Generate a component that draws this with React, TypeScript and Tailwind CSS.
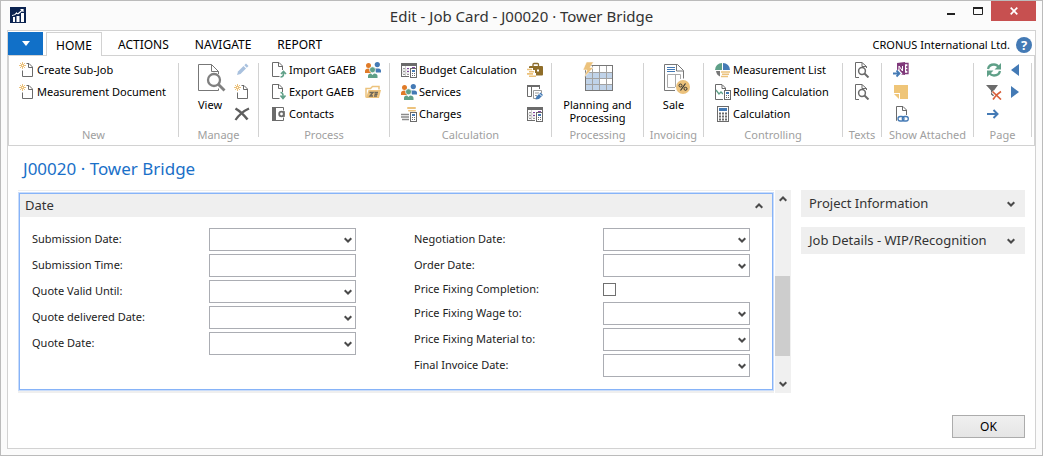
import React, { useId } from 'react';

type IconProps = { children: React.ReactNode; size?: number; className?: string };

function Icon({ children, size = 16, className = '' }: IconProps) {
  return (
    <svg
      width={size}
      height={size}
      viewBox={`0 0 ${size} ${size}`}
      fill="none"
      aria-hidden="true"
      className={`shrink-0 ${className}`}
    >
      {children}
    </svg>
  );
}

const GRAY = '#6b6b6b';
const BLUE = '#447ab5';
const GREEN = '#5fa088';
const SAND = '#ecc27c';
const ORANGE = '#e07b28';

const NewDocIcon = () => (
  <Icon>
    <path d="M7.5 1.5H10l3.500 3.500v9.500H3.500V8.500M9.500 1.500V5.500h4" stroke={GRAY} />
    <path d="M3.500 0v7M0 3.500h7M1 1l5 5M6 1L1 6" stroke={SAND} />
    <rect x="3" y="3" width="1" height="1" fill="#fff" />
  </Icon>
);

const DocArrowIcon = ({ down = false }: { down?: boolean }) => (
  <Icon>
    <path d="M8.500 14.500H1.500V.500H8l3.500 3.500v4M7.500 1v3.500H11.500" stroke={GRAY} />
    {down ? (
      <path d="M9.500 8.500c2 0 2.500 1 2.500 3v2M9.500 11.500l2.500 3 2.500-3" stroke={GREEN} strokeWidth="1.600" />
    ) : (
      <path d="M9.500 15c2 0 3-1 3-3V10M10 12l2.500-2.500 2.500 2.500" stroke={GREEN} strokeWidth="1.600" />
    )}
  </Icon>
);

const ContactsIcon = () => (
  <Icon>
    <rect x="1" y="1" width="4" height="14" fill={GRAY} />
    <path d="M4 1.500h8.500v3M4 14.500h8.500v-3" stroke={GRAY} />
    <circle cx="10.500" cy="8" r="2.300" stroke={GRAY} strokeWidth="1.800" />
    <path d="M13 5v6" stroke={GRAY} strokeWidth="1.500" />
  </Icon>
);

const PeopleIcon = () => (
  <Icon>
    <circle cx="3.500" cy="3.500" r="2.500" fill={ORANGE} />
    <path d="M0 11V9q0-2.500 3.500-2.500L6 8v3z" fill={ORANGE} />
    <circle cx="12.300" cy="2.600" r="2.600" fill={BLUE} />
    <path d="M9.500 6.500h4q2.500 0 2.500 2.500v1.500h-5z" fill={BLUE} />
    <circle cx="7.500" cy="7.800" r="3" fill={GREEN} stroke="#fff" strokeWidth=".7" />
    <path d="M3 16v-2q0-2.500 3-2.500l1.500 1.500L9 11.500q3.500 0 3.500 2.500v2z" fill={GREEN} />
  </Icon>
);

const FolderIcon = () => (
  <Icon>
    <path d="M1 13.500v-9h4.500l2-2h6.500v3" stroke={SAND} strokeWidth="1.500" />
    <path d="M1 14L3.500 6H16L14 14z" fill={SAND} />
    <path d="M4.500 8.500h3.500l-3 3.500h3M9 12h3M9.500 8.500h3.500M9.500 10.200h3" stroke="#6d675a" strokeWidth="1.400" />
  </Icon>
);

const CalcBadge = () => (
  <>
    <rect x="8" y="6" width="8" height="10" fill="#fff" />
    <rect x="9.500" y="6.500" width="6" height="9" stroke={GRAY} />
    <rect x="11" y="8" width="3" height="2" fill={BLUE} />
    <path d="M11 11.500h1M13 11.500h1M11 13.500h1M13 13.500h1" stroke={GRAY} />
  </>
);

const BudgetIcon = () => (
  <Icon>
    <rect width="16" height="3" y="1" fill={GRAY} />
    <rect x=".5" y="1.500" width="15" height="13" stroke={GRAY} />
    <path d="M2 6.500h2M2 9.500h2M2 12.500h2M6 12.500h2" stroke="#9a9a9a" />
    <path d="M6 6.500h3M11 5.500h3M6 9.500h2" stroke="#8244a0" />
    <path d="M4.500 4v10M1 8h8M1 11h8" stroke="#d0d0d0" />
    <CalcBadge />
  </Icon>
);

const ChargesIcon = () => (
  <Icon>
    <rect x="6" y="1" width="9" height="2" rx="1" fill={SAND} />
    <rect x="7" y="4" width="8" height="1.500" rx=".7" fill={SAND} />
    <path d="M0 8.500h8M0 11h8M1 13.500h7" stroke="#8a8a8a" strokeWidth="1.600" />
    <CalcBadge />
  </Icon>
);

const BriefcaseIcon = () => (
  <Icon>
    <path d="M6 4V2.500q0-1 1-1h3.500q1 0 1 1V4" stroke="#8a6b2c" strokeWidth="1.300" />
    <rect x="2" y="4" width="14" height="9.500" rx="1" fill="#8f6d28" />
    <path d="M10 7.500h2v2h-2z" fill="#fff" />
    <path d="M0 6h6v2h2v3h1v5H0z" fill="#fff" />
    <path d="M0 7.500h5M2 9.700h5M0 11.900h6M2 14.200h7" stroke={SAND} strokeWidth="1.600" />
  </Icon>
);

const TablePencilIcon = () => (
  <Icon>
    <path d="M0 2h13" stroke={GRAY} strokeWidth="2" />
    <path d="M.5 2v10.500h4V2M4.500 2v6M12.500 2v3" stroke={GRAY} />
    <path d="M6.500 6.500h8v3M6.500 6.500v8H9M8 9h4M8 11.500h2" stroke="#9a9a9a" />
    <path d="M8.500 15.500l1-3 4-4 2.500 2.500-4 4z" fill={BLUE} />
    <path d="M12 9.500l2.500 2.500" stroke="#fff" />
  </Icon>
);

const PencilIcon = () => (
  <Icon>
    <path d="M3 13l1-3.500 5.500-5.500 2.500 2.500L6.500 12z" fill="#a9c1de" />
    <path d="M10.300 3.200L12 1.500l2.500 2.500-1.700 1.700z" fill="#a9c1de" />
  </Icon>
);

const DeleteIcon = () => (
  <Icon>
    <path d="M1.500 2.500q6 3.500 12 11" stroke="#5e5e5e" strokeWidth="2.600" />
    <path d="M15 2.500Q7 6 1.500 14" stroke="#5e5e5e" strokeWidth="2.200" />
  </Icon>
);

const ViewIcon = () => (
  <Icon size={32}>
    <path d="M24.500 12V9.500l-7-7h-13v26h20v-2M17.500 2.500v7h7" stroke="#777" />
    <circle cx="20" cy="18" r="6" fill="#fff" stroke="#808080" strokeWidth="2.300" />
    <path d="M24.500 22.500l6 6" stroke="#808080" strokeWidth="2.800" />
  </Icon>
);

const PlanningIcon = () => (
  <Icon size={32}>
    <rect x="4" y="4" width="28" height="25" fill="#fff" />
    <path d="M4 10h28v6H4zM4 16h14v6H4zM4 22h28v7H4z" fill="#c0d3e9" />
    <path d="M11.500 4v25M18.500 4v25M25.500 4v25M4 10.500h28M4 16.500h28M4 22.500h28" stroke="#a2a2a2" />
    <rect x="4.500" y="3.500" width="27" height="25" stroke="#777" />
    <path d="M5.500 0h7L9 5.500h3.500L3 15.500 6 8H2z" fill={SAND} stroke="#fff" strokeWidth=".5" />
  </Icon>
);

const SaleIcon = () => (
  <Icon size={32}>
    <path d="M17 28.500H6.500v-26h13l6 6v8M18.500 3v6h7" stroke="#777" />
    <path d="M9 5.500h8M9 7.500h8M9 9.500h8" stroke={BLUE} />
    <path d="M22.500 17v-4.500h-13v13H17M17.500 13v12" stroke="#aaa" />
    <circle cx="25" cy="25" r="7" fill={SAND} />
    <path d="M27.500 21.500l-5 7" stroke="#333" strokeWidth="1.200" />
    <circle cx="22.500" cy="23.500" r="1.500" stroke="#333" />
    <circle cx="27.500" cy="26.800" r="1.500" stroke="#333" />
  </Icon>
);

const PieIcon = () => (
  <Icon>
    <path d="M7 8H0a7 7 0 0 1 7-7z" fill={GREEN} />
    <path d="M8 8V1a7 7 0 0 1 7 7z" fill={BLUE} />
    <path d="M5 9H1q.500 4 4 5.500z" fill="#777" />
    <path d="M6 10h5M9 10h6M7 12.200h7M6 14.500h7" stroke={SAND} strokeWidth="1.600" />
  </Icon>
);

const RollingIcon = () => (
  <Icon>
    <path d="M8 15.500H.500V.500H7l3.500 3.500v2M7 1v3.500h3.500" stroke={GRAY} />
    <path d="M1 6l3 4 2-2 2 2" stroke={GREEN} strokeWidth="1.300" />
    <CalcBadge />
  </Icon>
);

const CalculatorIcon = () => (
  <Icon>
    <rect x="2.500" y=".5" width="11" height="15" stroke={GRAY} />
    <rect x="4" y="2" width="8" height="3" fill={BLUE} />
    <path d="M4 7.500h2M7 7.500h2M10 7.500h2M4 10.500h2M7 10.500h2M10 10.500h2M4 13.500h2M7 13.500h2M10 13.500h2" stroke={GRAY} strokeWidth="2" />
  </Icon>
);

const DocSearchIcon = () => (
  <Icon>
    <path d="M5 15.500H1.500V.500H8l4.500 4V6M8 1v3.500h4.500" stroke={GRAY} />
    <circle cx="8" cy="9" r="3.400" fill="#fff" stroke={GRAY} strokeWidth="1.500" />
    <path d="M10.500 11.500l4 4" stroke={GRAY} strokeWidth="2" />
  </Icon>
);

const NotebookIcon = () => (
  <Icon>
    <path d="M4 1l8-1v13l-8-1z" fill="#80397b" />
    <path d="M6 9V4l3.500 5V4" stroke="#fff" />
    <path d="M12 1.500h3v10h-3M13 5h2M13 8h2" stroke="#80397b" strokeWidth="1.300" />
    <path d="M0 11.500h6M4 8.500l3 3-3 3" stroke="#fff" strokeWidth="3.500" />
    <path d="M0 11.500h6M3.500 8.500l3 3-3 3" stroke={BLUE} strokeWidth="1.800" />
  </Icon>
);

const NoteIcon = () => (
  <Icon>
    <path d="M1 1h14v14H7V9H1z" fill="#efc578" />
    <path d="M1 10h5v5z" fill="#efc578" />
  </Icon>
);

const DocLinkIcon = () => (
  <Icon>
    <path d="M4 14.500H3.500V.500H10l3.500 3.500v5M9.500 1v3.500h4" stroke={GRAY} />
    <rect x="5" y="9" width="11" height="7" fill="#fff" />
    <rect x="5" y="10.500" width="6" height="4.500" rx="2.200" stroke={BLUE} strokeWidth="1.300" />
    <rect x="9.300" y="10.500" width="6" height="4.500" rx="2.200" stroke={BLUE} strokeWidth="1.300" />
  </Icon>
);

const RefreshIcon = () => (
  <Icon>
    <path d="M2 7q1-4.500 6-4.500 3 0 4.500 2.500M14 9q-1 4.500-6 4.500-3 0-4.500-2.500" stroke={GREEN} strokeWidth="2.300" />
    <path d="M15 1v6.500H8.500zM1 15V8.500h6.500z" fill={GREEN} />
  </Icon>
);

const ClearFilterIcon = () => (
  <Icon>
    <path d="M0 1h12L8 6.500V13L5 10.500v-4z" fill={GRAY} />
    <path d="M6.500 7.500l8.500 8M15 7.500q-5 3-8 8" stroke="#fff" strokeWidth="3.500" />
    <path d="M6.500 7.500l8.500 8M15 7.500q-5 3-8 8" stroke="#d9603b" strokeWidth="1.700" />
  </Icon>
);

const GoToIcon = () => (
  <Icon>
    <path d="M1 8h10M7.500 4l4 4-4 4" stroke={BLUE} strokeWidth="2" />
  </Icon>
);

const PrevIcon = () => (
  <Icon>
    <path d="M9 2v12L1 8z" fill={BLUE} />
  </Icon>
);

const NextIcon = () => (
  <Icon>
    <path d="M1 2v12l8-6z" fill={BLUE} />
  </Icon>
);

const AppIcon = () => (
  <Icon>
    <rect width="16" height="16" fill="#0b2350" />
    <path d="M3 10h2v5H3zM6.500 9h3v6h-3zM11 6h3v9h-3z" fill="#fff" />
    <path d="M2 8.500q3 0 4.500-2.500 1 1.500 2.500 0l4-3.500M10.500 2.500H13V5" stroke="#fff" strokeWidth="1.200" />
  </Icon>
);

function Chevron({ up = false, className = '' }: { up?: boolean; className?: string }) {
  return (
    <svg width="8" height="6" viewBox="0 0 8 6" fill="none" aria-hidden="true" className={`shrink-0 ${className}`}>
      <path d={up ? 'M.7 4.800L4 1.500l3.300 3.300' : 'M.7 1.200L4 4.500l3.300-3.300'} stroke="#4a4a4a" strokeWidth="2" />
    </svg>
  );
}

function Command({ icon, label }: { icon: React.ReactNode; label: string }) {
  return (
    <button type="button" className="flex h-[22px] items-center gap-0.5 whitespace-nowrap text-black">
      {icon}
      <span>{label}</span>
    </button>
  );
}

function IconCommand({ icon, label }: { icon: React.ReactNode; label: string }) {
  return (
    <button type="button" aria-label={label} className="flex h-[22px] items-center">
      {icon}
    </button>
  );
}

function BigCommand({ icon, children }: { icon: React.ReactNode; children: React.ReactNode }) {
  return (
    <button type="button" className="flex flex-col items-center pt-[3px] text-center leading-[13px] whitespace-nowrap text-black">
      {icon}
      <span className="mt-1">{children}</span>
    </button>
  );
}

function Group({ name, width, body, children }: { name: string; width: string; body: string; children: React.ReactNode }) {
  return (
    <>
      <section aria-label={name} className={`flex shrink-0 flex-col ${width}`}>
        <div className={`flex h-[66px] items-start ${body}`}>{children}</div>
        <h2 className="text-center leading-5 whitespace-nowrap text-[#a0a0a0]">{name}</h2>
      </section>
      <div className="mt-1 mb-2 w-px shrink-0 bg-[#d2d2d2]" />
    </>
  );
}

function Column({ children }: { children: React.ReactNode }) {
  return <div className="flex flex-col items-start">{children}</div>;
}

function Ribbon() {
  return (
    <div className="flex overflow-hidden border-x border-b border-[#d2d2d2] pt-[3px]">
      <Group name="New" width="w-[169px]" body="pl-2.5">
        <Column>
          <Command icon={<NewDocIcon />} label="Create Sub-Job" />
          <Command icon={<NewDocIcon />} label="Measurement Document" />
        </Column>
      </Group>
      <Group name="Manage" width="w-[79px]" body="justify-between pr-2 pl-[15px]">
        <BigCommand icon={<ViewIcon />}>View</BigCommand>
        <Column>
          <IconCommand icon={<PencilIcon />} label="Edit" />
          <IconCommand icon={<NewDocIcon />} label="New" />
          <IconCommand icon={<DeleteIcon />} label="Delete" />
        </Column>
      </Group>
      <Group name="Process" width="w-[130px]" body="justify-between pr-2 pl-3">
        <Column>
          <Command icon={<DocArrowIcon />} label="Import GAEB" />
          <Command icon={<DocArrowIcon down />} label="Export GAEB" />
          <Command icon={<ContactsIcon />} label="Contacts" />
        </Column>
        <Column>
          <IconCommand icon={<PeopleIcon />} label="Team" />
          <IconCommand icon={<FolderIcon />} label="Folder" />
        </Column>
      </Group>
      <Group name="Calculation" width="w-[161px]" body="justify-between pr-2 pl-[11px]">
        <Column>
          <Command icon={<BudgetIcon />} label="Budget Calculation" />
          <Command icon={<PeopleIcon />} label="Services" />
          <Command icon={<ChargesIcon />} label="Charges" />
        </Column>
        <Column>
          <IconCommand icon={<BriefcaseIcon />} label="Costs" />
          <IconCommand icon={<TablePencilIcon />} label="Edit table" />
          <IconCommand icon={<BudgetIcon />} label="Budget" />
        </Column>
      </Group>
      <Group name="Processing" width="w-[91px]" body="justify-center">
        <BigCommand icon={<PlanningIcon />}>
          Planning and
          <br />
          Processing
        </BigCommand>
      </Group>
      <Group name="Invoicing" width="w-[59px]" body="justify-center">
        <BigCommand icon={<SaleIcon />}>Sale</BigCommand>
      </Group>
      <Group name="Controlling" width="w-[138px]" body="pl-[11px]">
        <Column>
          <Command icon={<PieIcon />} label="Measurement List" />
          <Command icon={<RollingIcon />} label="Rolling Calculation" />
          <Command icon={<CalculatorIcon />} label="Calculation" />
        </Column>
      </Group>
      <Group name="Texts" width="w-[38px]" body="justify-center">
        <Column>
          <IconCommand icon={<DocSearchIcon />} label="Header text" />
          <IconCommand icon={<DocSearchIcon />} label="Footer text" />
        </Column>
      </Group>
      <Group name="Show Attached" width="w-[91px]" body="pl-[11px]">
        <Column>
          <IconCommand icon={<NotebookIcon />} label="Notebook" />
          <IconCommand icon={<NoteIcon />} label="Notes" />
          <IconCommand icon={<DocLinkIcon />} label="Links" />
        </Column>
      </Group>
      <Group name="Page" width="w-[57px]" body="gap-2 pl-3">
        <Column>
          <IconCommand icon={<RefreshIcon />} label="Refresh" />
          <IconCommand icon={<ClearFilterIcon />} label="Clear filter" />
          <IconCommand icon={<GoToIcon />} label="Go to" />
        </Column>
        <Column>
          <IconCommand icon={<PrevIcon />} label="Previous" />
          <IconCommand icon={<NextIcon />} label="Next" />
        </Column>
      </Group>
    </div>
  );
}

type FieldKind = 'date' | 'text' | 'check';

function Field({ label, kind, columns }: { label: string; kind: FieldKind; columns: string }) {
  const id = useId();
  const control = 'block h-[23px] w-full appearance-none border border-[#abadb3] bg-white px-1';
  return (
    <div className={`grid items-center ${columns} ${kind === 'check' ? 'h-[22px]' : 'h-[26px]'}`}>
      <label htmlFor={id} className="leading-4 whitespace-nowrap">
        {label}
      </label>
      {kind === 'date' && (
        <div className="relative">
          <select id={id} className={control}>
            <option value="" />
          </select>
          <Chevron className="pointer-events-none absolute top-[9px] right-1" />
        </div>
      )}
      {kind === 'text' && <input id={id} type="text" className={control} />}
      {kind === 'check' && (
        <input id={id} type="checkbox" className="size-[13px] appearance-none border border-[#707070] bg-white checked:bg-[#707070]" />
      )}
    </div>
  );
}

const LEFT: [string, FieldKind][] = [
  ['Submission Date:', 'date'],
  ['Submission Time:', 'text'],
  ['Quote Valid Until:', 'date'],
  ['Quote delivered Date:', 'date'],
  ['Quote Date:', 'date'],
];

const RIGHT: [string, FieldKind][] = [
  ['Negotiation Date:', 'date'],
  ['Order Date:', 'date'],
  ['Price Fixing Completion:', 'check'],
  ['Price Fixing Wage to:', 'date'],
  ['Price Fixing Material to:', 'date'],
  ['Final Invoice Date:', 'date'],
];

function FactBox({ title }: { title: string }) {
  return (
    <button type="button" className="flex h-[27px] w-full items-center justify-between bg-[#efefef] pr-2.5 pl-2 text-[13px] text-[#333]">
      <span className="whitespace-nowrap">{title}</span>
      <Chevron />
    </button>
  );
}

export default function App() {
  return (
    <div className="flex min-h-screen flex-col border border-[#bbb] bg-[#fbfbfb] px-1.5 pb-1.5 font-['Noto_Sans','Open_Sans',sans-serif] text-[11px] text-[#1c1c1c]">
      <header className="grid h-[29px] grid-cols-[1fr_auto_1fr] items-start">
        <div className="pt-1.5 pl-[3px]">
          <AppIcon />
        </div>
        <h1 className="pt-[3px] text-[15px] leading-6 text-[#333]">Edit - Job Card - J00020 · Tower Bridge</h1>
        <div className="flex h-5 justify-end">
          <button type="button" aria-label="Minimize" className="flex w-[27px] items-center justify-center">
            <svg width="8" height="8" aria-hidden="true">
              <path d="M0 6h8v2H0z" fill="#222" />
            </svg>
          </button>
          <button type="button" aria-label="Maximize" className="flex w-[27px] items-center justify-center">
            <svg width="10" height="8" aria-hidden="true">
              <path d="M.5 0v7.500h9V0" fill="none" stroke="#222" />
              <path d="M0 0h10v2H0z" fill="#222" />
            </svg>
          </button>
          <button type="button" aria-label="Close" className="flex w-[45px] items-center justify-center bg-[#c75050]">
            <svg width="8" height="8" aria-hidden="true">
              <path d="M.7.7l6.600 6.600M7.300.7L.7 7.300" stroke="#fff" strokeWidth="1.700" />
            </svg>
          </button>
        </div>
      </header>

      <main className="flex grow flex-col border border-[#d2d2d2] bg-white">
        <nav className="flex h-[25px] items-end pt-px text-[12px] text-black">
          <button type="button" aria-label="Application menu" className="flex h-full w-[35px] items-center justify-center border-b border-[#d2d2d2] bg-[#1170c8]">
            <svg width="8" height="5" aria-hidden="true">
              <path d="M0 0h8L4 5z" fill="#fff" />
            </svg>
          </button>
          <div className="h-full w-[3px] border-b border-[#d2d2d2]" />
          <button type="button" className="h-full w-14 border-x border-t border-[#d2d2d2] pt-0.5">HOME</button>
          <div className="flex h-full grow items-center justify-between border-b border-[#d2d2d2] pt-[3px] pr-[3px] pl-4">
            <div className="flex gap-[26px]">
              <button type="button">ACTIONS</button>
              <button type="button">NAVIGATE</button>
              <button type="button">REPORT</button>
            </div>
            <div className="flex items-center gap-1.5 text-[11px]">
              <span>CRONUS International Ltd.</span>
              <button type="button" aria-label="Help" className="flex size-4 items-center justify-center rounded-full bg-[#447ab5] text-[13px] leading-4 font-bold text-white">
                ?
              </button>
            </div>
          </div>
        </nav>

        <Ribbon />

        <div className="flex grow flex-col pr-2.5 pb-2.5 pl-2.5">
          <h2 className="pt-[11px] pl-[5px] text-[17px] leading-6 text-[#1a70c8]">J00020 · Tower Bridge</h2>

          <div className="mt-[9px] flex items-start">
            <div className="flex min-w-0 grow gap-px">
              <div className="flex min-w-0 grow flex-col border-t border-b-2 border-[#efefef] pt-px">
                <section className="grow border border-[#c9dcfa]">
                  <div className="h-full border border-[#86b3f8] pb-[11px]">
                    <button type="button" className="flex h-[23px] w-full items-center justify-between bg-[#efefef] pr-[9px] pl-[5px] text-[13px] text-[#333]">
                      <span>Date</span>
                      <Chevron up />
                    </button>
                    <div className="flex gap-[58px] pt-[9px] pr-[22px] pl-3 text-[#222]">
                      <div className="shrink-0 grow basis-[177px]">
                        {LEFT.map(([label, kind]) => (
                          <Field key={label} label={label} kind={kind} columns="grid-cols-[177px_minmax(0,1fr)]" />
                        ))}
                      </div>
                      <div className="shrink-0 grow basis-[189px]">
                        {RIGHT.map(([label, kind]) => (
                          <Field key={label} label={label} kind={kind} columns="grid-cols-[189px_minmax(0,1fr)]" />
                        ))}
                      </div>
                    </div>
                  </div>
                </section>
              </div>
              <div className="flex w-4 shrink-0 flex-col items-center bg-[#f0f0f0] py-1.5" aria-hidden="true">
                <Chevron up />
                <div className="grow-[74]" />
                <div className="h-20 w-full border-r border-[#f0f0f0] bg-[#cdcdcd]" />
                <div className="grow-[25]" />
                <Chevron />
              </div>
            </div>
            <aside className="ml-2.5 flex w-[224px] shrink-0 flex-col gap-2.5">
              <FactBox title="Project Information" />
              <FactBox title="Job Details - WIP/Recognition" />
            </aside>
          </div>

          <footer className="mt-auto flex justify-end">
            <button type="button" className="h-[23px] w-[73px] border border-[#acacac] bg-linear-to-b from-[#f0f0f0] to-[#e5e5e5] text-[12px] text-black">
              OK
            </button>
          </footer>
        </div>
      </main>
    </div>
  );
}
